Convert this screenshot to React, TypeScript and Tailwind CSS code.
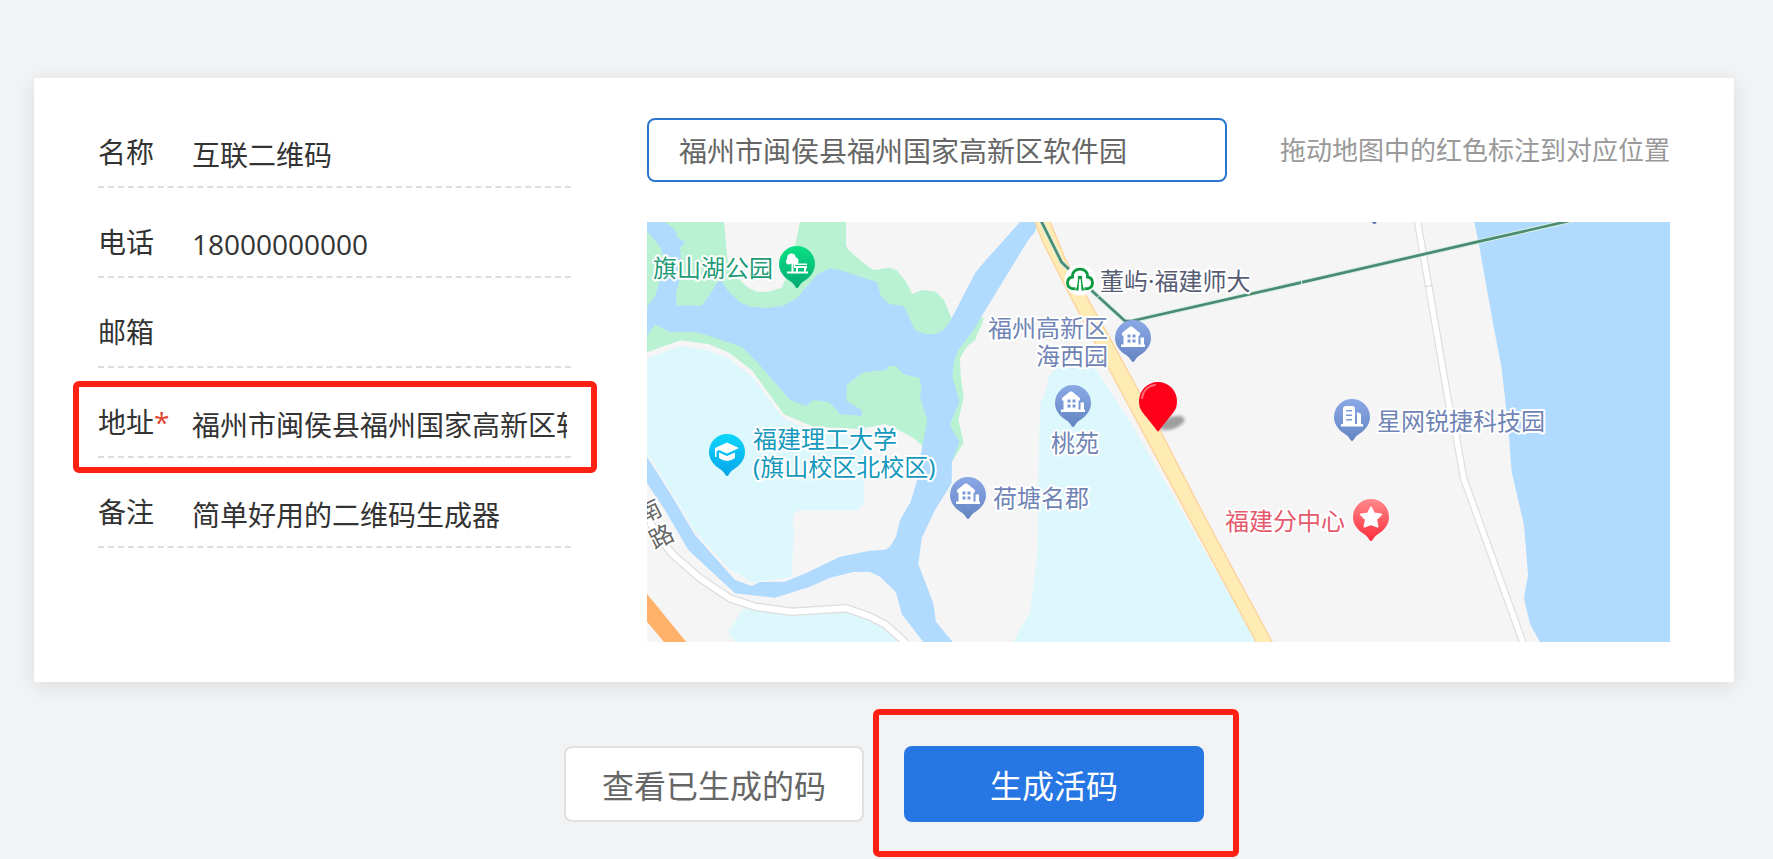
import React, { useState } from 'react';
import clsx from 'clsx';

const fields = [
  { id: 'name', label: '名称', value: '互联二维码' },
  { id: 'phone', label: '电话', value: '18000000000' },
  { id: 'email', label: '邮箱', value: '' },
  { id: 'address', label: '地址', value: '福州市闽侯县福州国家高新区软件园', required: true },
  { id: 'remark', label: '备注', value: '简单好用的二维码生成器' },
];

const labels = [
  { text: '旗山湖公园', x: 6, y: 55, color: '#1e9b76' },
  { text: '福建理工大学', x: 106, y: 226, color: '#1499bd' },
  { text: '(旗山校区北校区)', x: 106, y: 254, color: '#1499bd' },
  { text: '董屿·福建师大', x: 453, y: 68, color: '#565c73' },
  { text: '福州高新区', x: 461, y: 115, color: '#7084b5', end: true },
  { text: '海西园', x: 461, y: 143, color: '#7084b5', end: true },
  { text: '桃苑', x: 404, y: 230, color: '#7084b5' },
  { text: '荷塘名郡', x: 346, y: 285, color: '#7084b5' },
  { text: '福建分中心', x: 578, y: 308, color: '#e55a6b' },
  { text: '星网锐捷科技园', x: 730, y: 208, color: '#7084b5' },
];

const Pin = ({ x, y, fill, children }: { x: number; y: number; fill: string; children: React.ReactNode }) => (
  <g transform={`translate(${x} ${y})`}>
    <path d="M-18 0A18 18 0 1 1 18 0C18 6 15 11 10 15L5 18.5Q3 20 1.5 23Q0 25 -1.5 23Q-3 20 -5 18.5L-10 15C-15 11 -18 6 -18 0Z" fill={fill} />
    {children}
  </g>
);

const House = ({ x, y }: { x: number; y: number }) => (
  <Pin x={x} y={y} fill="url(#pin-blue)">
    <path
      fill="#fff"
      fillRule="evenodd"
      d="M-11 -5L-3 -11.500H-1L7 -5V-2.500H5.500V6.500H7.500V-.5H11V6.500H12V9H-12V6.500H-9.500V-2.500H-11ZM-5.500 -3.500V-.5H-2.500V-3.500ZM-.5 -3.500V-.5H2.500V-3.500ZM-5.500 1.500V4.500H-2.500V1.500ZM-.5 1.500V4.500H2.500V1.500Z"
    />
  </Pin>
);

const MapView = () => (
  <svg
    className="block h-[420px] w-full bg-[#f5f5f5]"
    viewBox="0 0 1023 420"
    preserveAspectRatio="xMidYMid slice"
    role="img"
    aria-label="地图"
  >
    <defs>
      <linearGradient id="pin-green" x1="0" y1="0" x2="0" y2="1">
        <stop offset="0" stopColor="#0be083" />
        <stop offset="1" stopColor="#04a974" />
      </linearGradient>
      <linearGradient id="pin-cyan" x1="0" y1="0" x2="0" y2="1">
        <stop offset="0" stopColor="#0dd6fb" />
        <stop offset="1" stopColor="#06a5ea" />
      </linearGradient>
      <linearGradient id="pin-blue" x1="0" y1="0" x2="0" y2="1">
        <stop offset="0" stopColor="#8ba8e6" />
        <stop offset="1" stopColor="#6485c2" />
      </linearGradient>
      <linearGradient id="pin-red" x1="0" y1="0" x2="0" y2="1">
        <stop offset="0" stopColor="#ff8a8c" />
        <stop offset="1" stopColor="#fc2c3a" />
      </linearGradient>
      <filter id="soft" x="-50%" y="-50%" width="200%" height="200%">
        <feGaussianBlur stdDeviation="1.500" />
      </filter>
    </defs>

    {/* Terrain and roads, drawn on a grid three times finer than the map */}
    <g transform="scale(0.33333) translate(-21 -21)">
      <path
        fill="#b9f2d2"
        d="M21 21H252L258 85L262 130L290 185L320 215L350 230H385L425 218L440 185L468 80L480 21H618V92L628 107L665 140L700 165L750 158L770 166L797 198L817 237L845 225L887 230L912 255L935 310L1022 305L1032 310L1005 375L980 395L960 430L962 480L971 548L955 615L971 683L936 740L852 697L820 668L775 645L735 627L660 642L520 635L432 598L335 465L265 412L205 387L120 376L21 412Z"
      />
      <g fill="#ddf8fd">
        <path d="M21 430L120 393L200 405L265 430L340 490L430 610L480 632L672 670V868L650 885H475L460 898L458 930L462 945L455 1085L340 1103L265 1060L165 950L100 840L21 715Z" />
        <path d="M310 1180L265 1250L285 1281H790L730 1225L680 1200L620 1190L455 1195Z" />
        <path d="M1255 455L1290 445L1365 460L1385 490L1485 645L1710 1035L1850 1281H1120L1170 1190L1192 1025L1198 645L1202 560L1220 520L1225 485Z" />
      </g>
      <path
        fill="#b0dbff"
        d="M21 21H75L105 45L112 68L136 80L120 98L125 160L108 240L110 272H185L205 245L240 190L262 225L300 262L330 275L380 279L430 272L470 250L500 215L530 180L568 160L600 165L712 202L722 242L748 267L792 274L825 345L855 357H885L912 345L935 310L1005 175L1020 155L1140 21H1195L1185 50L1165 75L1024 305L1000 345L955 405L942 440L937 485L958 560L930 628L937 645L958 680L936 740L935 805L885 885L845 970L835 1048L880 1165L888 1220L938 1281H850L785 1197L768 1132L720 1085L690 1071H640L570 1088L510 1115L405 1148L285 1135L145 1005L75 885L21 805V725L100 850L165 960L285 1095L335 1113L360 1101L435 1100L500 1073L600 1025L690 1007L735 1004L750 995L768 965L780 915L812 860L830 800L845 705L862 615L840 548L845 518L838 488L790 478L768 453H745L740 465L670 472L622 508L618 545L622 560L665 585V603L600 597L568 562L520 555L498 573L450 555L420 520L350 440L305 395L190 357L165 351H90L45 328L21 362V275L45 245L65 180L70 125L60 95L21 48Z"
      />
      <path fill="#b0dbff" d="M2503 21L2517 90L2560 330L2585 460L2605 640L2615 770L2652 930L2664 1080L2652 1150L2670 1227L2700 1281H3090V21Z" />
      <path fill="#ffb169" d="M21 1137L139 1281H72L21 1220Z" />
      <g fill="none" strokeLinejoin="round">
        <path stroke="#dedede" strokeWidth="26" d="M21 910L75 990L100 1020L180 1090L270 1150L345 1175L455 1190L620 1180L690 1205L735 1228L800 1286" />
        <path stroke="#fff" strokeWidth="18" d="M21 910L75 990L100 1020L180 1090L270 1150L345 1175L455 1190L620 1180L690 1205L735 1228L800 1286" />
        <path stroke="#dedede" strokeWidth="23" d="M2332 15L2366 213L2434 610L2447 655L2471 790L2650 1286" />
        <path stroke="#fff" strokeWidth="16" d="M2332 15L2366 213L2434 610L2447 655L2471 790L2650 1286" />
        <path stroke="#d5d5d5" strokeWidth="3" d="M2355 215L2378 211" />
      </g>
      <path
        fill="#ffebb4"
        stroke="#ffd29b"
        strokeWidth="4"
        d="M1183 15L1210 85L1320 300L1505 645L1852 1287H1900L1710 935L1655 830L1560 645L1410 370L1275 130L1228 15Z"
      />
      <g fill="none" strokeLinejoin="round">
        <path stroke="#d5eee2" strokeWidth="14" d="M1202 15L1265 142L1320 195L1455 318H1475L1985 202L2515 80L2800 15" />
        <path stroke="#4b8b73" strokeWidth="8" d="M1202 15L1265 142L1320 195L1455 318H1475L1985 202L2515 80L2800 15" />
        <path stroke="#e4f4ec" strokeWidth="3" d="M1983 192L1987 212M1365 254L1378 242" />
      </g>
      <circle cx="2203" cy="20" r="7" fill="#5b6fae" />
    </g>

    <Pin x={150} y={42} fill="url(#pin-green)">
      <circle cx="-5.500" cy="-6" r="4.500" fill="#fff" />
      <circle cx="-8" cy="-2.500" r="3" fill="#fff" />
      <circle cx="-2" cy="-3" r="3.500" fill="#fff" />
      <path fill="#fff" d="M-5.500 -2H-3.500V7.500H-1V4H-3V-.5H10V4.500H9V7.500H11V9.500H-10V7.500H-5.500ZM1 4V7.500H7V4Z" />
      <path stroke="#06bf7a" d="M-2 1.500H10" />
    </Pin>
    <Pin x={80} y={230} fill="url(#pin-cyan)">
      <path fill="#fff" d="M-12 -4L0 -9.500L12 -4L0 1.500L-8 -2L-10.500 -.5V5H-12Z" />
      <path fill="#fff" d="M-8 .5L0 4L8 .5V6Q0 12 -8 6Z" />
    </Pin>
    <House x={321} y={273} />
    <House x={486} y={116} />
    <House x={426} y={181} />
    <Pin x={705} y={195} fill="url(#pin-blue)">
      <path
        fill="#fff"
        fillRule="evenodd"
        d="M-9 -8Q-9 -11 -6 -11H0Q3 -11 3 -8V7H5V-5L9 -3V7H11V9.500H-11V7H-9ZM-6 -7V-5.500H0V-7ZM-6 -2.500V-1H0V-2.500ZM-6 2V3.500H0V2Z"
      />
    </Pin>
    <Pin x={724} y={295} fill="url(#pin-red)">
      <path
        fill="#fff"
        stroke="#fff"
        strokeWidth="2"
        strokeLinejoin="round"
        d="M0 -9.500L3 -3.500L10 -2.500L5 2.500L6.500 9.500L0 7L-6.500 9.500L-5 2.500L-10 -2.500L-3 -3.500Z"
      />
    </Pin>

    {/* Metro station */}
    <g transform="translate(433 58)">
      <circle r="15.500" fill="#fff" />
      <g fill="none" stroke="#0c9a3f" strokeWidth="2.800">
        <path d="M-4.500 8.500C-9 9.500 -12.500 7 -12.500 3C-12.500 0 -10.500 -2.500 -7.500 -3C-8 -8 -4.500 -10.800 0 -10.800C4.500 -10.800 8 -8 7.500 -3C10.500 -2.500 12.500 0 12.500 3C12.500 7 9 9.500 4.500 8.500" />
      </g>
      <path d="M-4.500 10.500C-2.500 6 -2 2 -2 -4H2C2 2 2.500 6 4.500 10.500H1.500L.7 -1H-.7L-1.500 10.500Z" fill="#0c9a3f" />
    </g>

    <g
      fontFamily="'Noto Sans', 'Noto Sans CJK SC', sans-serif"
      fontSize="24"
      stroke="#fff"
      strokeWidth="4"
      strokeLinejoin="round"
      paintOrder="stroke"
    >
      {labels.map((label) => (
        <text key={label.text} x={label.x} y={label.y} fill={label.color} textAnchor={label.end ? 'end' : 'start'}>
          {label.text}
        </text>
      ))}
      <g fill="#666" textAnchor="middle">
        <text transform="translate(2 289) rotate(-27)" y="9">南</text>
        <text transform="translate(14 314) rotate(-27)" y="9">路</text>
      </g>
    </g>

    {/* Draggable marker */}
    <ellipse cx="525" cy="201" rx="13" ry="6" transform="rotate(-20 525 201)" fill="#000" opacity="0.35" filter="url(#soft)" />
    <path d="M511 210Q509 207 496 191C493 187 492 184 492 179A19 19 0 0 1 530 179C530 184 529 187 526 191Q513 207 511 210Z" fill="#ff001b" />
    <path d="M495 176C496 169 501 164 508 163" fill="none" stroke="#ff6b78" strokeWidth="2" strokeLinecap="round" />
  </svg>
);

export default function App() {
  const [values, setValues] = useState<Record<string, string>>(
    Object.fromEntries(fields.map((field) => [field.id, field.value]))
  );
  const [place, setPlace] = useState('福州市闽侯县福州国家高新区软件园');

  return (
    <main className="min-h-screen bg-[#f1f3f5] pt-[78px] pr-[39px] pl-[34px] font-['Open_Sans','Noto_Sans_CJK_SC',sans-serif]">
      <section className="flex gap-[76px] bg-white px-16 py-10 shadow-[0_4px_20px_rgba(0,0,0,0.1)]">
        <form className="flex w-[473px] shrink-0 flex-col gap-5 text-[28px] leading-10 text-[#333]">
          {fields.map((field) => (
            <div
              key={field.id}
              className="relative flex h-[70px] items-center border-b-2 border-dashed border-[#ddd] pr-1"
            >
              <label htmlFor={field.id} className="w-[94px] shrink-0">
                {field.label}
                {field.required && <span className="text-[#e0452f]">*</span>}
              </label>
              <input
                id={field.id}
                type="text"
                value={values[field.id]}
                onChange={(e) => setValues({ ...values, [field.id]: e.target.value })}
                className="h-11 min-w-0 flex-1 bg-transparent pt-1 outline-none"
              />
              {field.required && (
                <span className="pointer-events-none absolute -top-[7px] -right-[26px] -bottom-[17px] -left-[25px] rounded-md border-6 border-[#fc2113]" />
              )}
            </div>
          ))}
        </form>

        <div className="min-w-0 flex-1">
          <div className="flex items-center justify-between gap-10">
            <input
              type="text"
              aria-label="搜索位置"
              value={place}
              onChange={(e) => setPlace(e.target.value)}
              className="h-16 w-[580px] min-w-0 rounded-lg border-2 border-[#2b76cf] px-[30px] text-[28px] text-[#666] outline-none"
            />
            <p className="shrink-0 text-[26px] leading-10 text-[#999]">拖动地图中的红色标注到对应位置</p>
          </div>
          <div className="mt-10">
            <MapView />
          </div>
        </div>
      </section>

      <div className="mt-16 flex justify-center gap-10 text-[32px]">
        {[
          { text: '查看已生成的码', primary: false },
          { text: '生成活码', primary: true },
        ].map((button) => (
          <div key={button.text} className="relative">
            <button
              type="button"
              className={clsx(
                'h-[76px] w-[300px] rounded-lg pt-1',
                button.primary ? 'bg-[#2676e3] text-white' : 'border-2 border-[#e0e0e0] bg-white text-[#666]'
              )}
            >
              {button.text}
            </button>
            {button.primary && (
              <span className="pointer-events-none absolute -top-[37px] -right-[35px] -bottom-[35px] -left-[31px] rounded-md border-6 border-[#fc2113]" />
            )}
          </div>
        ))}
      </div>
    </main>
  );
}
